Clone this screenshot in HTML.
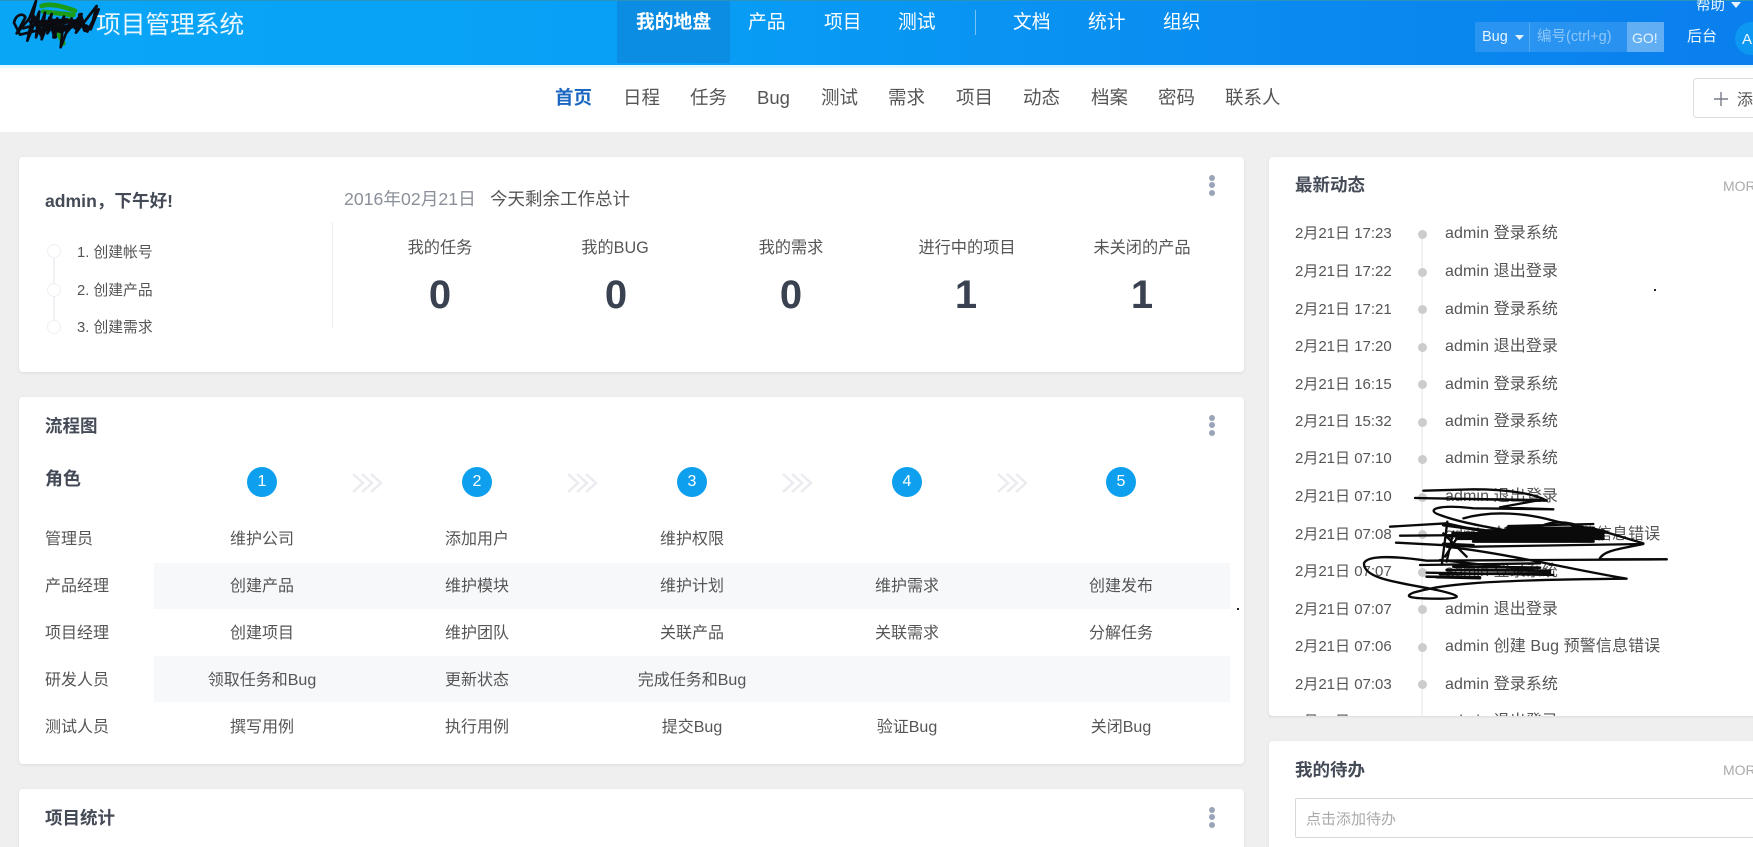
<!DOCTYPE html>
<html lang="zh"><head><meta charset="utf-8"><title>项目管理系统</title>
<style>
html,body{margin:0;padding:0;width:1753px;height:847px;overflow:hidden}
#r{width:1753px;height:847px;overflow:hidden;position:relative;background:#efefef;font-family:"Liberation Sans","Noto Sans CJK SC",sans-serif;color:#555}
.a{position:absolute;white-space:nowrap;line-height:24px;margin-top:-10px}
.c{transform:translateX(-50%)}
.card{position:absolute;background:#fff;border-radius:4px;box-shadow:0 1px 3px rgba(0,0,0,.08)}
.nav{font-size:18.8px;color:#fff}
.sub{font-size:18.5px;color:#555}
.ttl{font-size:17.5px;font-weight:700;color:#444b57;left:45px;margin-top:-11px}
.lab{font-size:16.2px;color:#555}
.num{font-size:40px;font-weight:700;color:#3a4150}
.step{font-size:14.8px;color:#555;left:77px}
.cel{font-size:16px;color:#555}
.role{font-size:16px;color:#555;left:45px}
.dt{font-size:15px;color:#555;left:1295px;margin-top:-11.5px}
.tx{font-size:16px;letter-spacing:.1px;color:#555;left:1445px;margin-top:-11px}
.dot{position:absolute;width:9px;height:9px;border-radius:50%;background:#ccc;left:1418px;margin-top:1px}
.num-c{position:absolute;width:30px;height:30px;border-radius:50%;background:#0ea0ee;color:#fff;font-size:16px;line-height:30px;text-align:center;top:467px}
.alt{position:absolute;left:154px;width:1076px;background:#f7f8fa}
.m{position:absolute;width:6px;height:6px;border-radius:50%;background:#9aa4b8;left:1209px}
.st{position:absolute;left:47px;width:14px;height:14px;border-radius:50%;background:#fff;border:1px solid #eef0f3;box-sizing:border-box}
</style></head><body><div id="r">

<div style="position:absolute;left:0;top:0;width:1753px;height:65px;background:linear-gradient(90deg,#0aa6f6 0%,#07a0f6 35%,#0a8cf0 70%,#0a7fee 100%);border-top:1px solid #2a93bd;box-sizing:border-box"></div>
<div style="position:absolute;left:0;top:65px;width:1753px;height:67px;background:#fff"></div>
<div style="position:absolute;left:0;top:65px;width:1753px;height:3px;background:#e6f8ff"></div>
<div style="position:absolute;left:617px;top:1px;width:113px;height:62px;background:#0a8de2"></div>

<div class="a" style="left:96px;top:24px;font-size:24.7px;color:#eaf7ff">项目管理系统</div>
<div class="a nav" style="left:636px;top:20px;font-weight:700">我的地盘</div>
<div class="a nav" style="left:748px;top:20px">产品</div>
<div class="a nav" style="left:824px;top:20px">项目</div>
<div class="a nav" style="left:898px;top:20px">测试</div>
<div style="position:absolute;left:975px;top:10px;width:1px;height:25px;background:rgba(255,255,255,.45)"></div>
<div class="a nav" style="left:1013px;top:20px">文档</div>
<div class="a nav" style="left:1088px;top:20px">统计</div>
<div class="a nav" style="left:1163px;top:20px">组织</div>

<div class="a" style="left:1696px;top:4px;font-size:14.5px;color:#e6f4ff">帮助</div>
<svg style="position:absolute;left:1731px;top:2px" width="10" height="6"><path d="M0 0H10L5 6Z" fill="#e6f4ff"/></svg>
<div style="position:absolute;left:1475px;top:22px;width:189px;height:30px;background:rgba(255,255,255,.13);border-radius:2px"></div>
<div style="position:absolute;left:1529px;top:22px;width:1px;height:30px;background:rgba(255,255,255,.18)"></div>
<div style="position:absolute;left:1627px;top:22px;width:37px;height:30px;background:rgba(255,255,255,.27)"></div>
<div class="a" style="left:1482px;top:35px;font-size:14.5px;color:#e6f4ff">Bug</div>
<svg style="position:absolute;left:1515px;top:35px" width="9" height="5"><path d="M0 0H9L4.5 5Z" fill="#e6f4ff"/></svg>
<div class="a" style="left:1537px;top:35px;font-size:14.5px;color:rgba(255,255,255,.48)">编号(ctrl+g)</div>
<div class="a" style="left:1632px;top:36px;font-size:14px;color:#e6f4ff">GO!</div>
<div class="a" style="left:1687px;top:35px;font-size:15px;color:#eef8ff">后台</div>
<div style="position:absolute;left:1735px;top:22px;width:33px;height:33px;border-radius:50%;background:#0c98f2"></div>
<div class="a" style="left:1742px;top:38px;font-size:15px;color:#eef8ff">A</div>

<div class="a sub" style="left:555px;top:96px;font-weight:700;color:#1a66c0">首页</div>
<div class="a sub" style="left:623px;top:96px">日程</div>
<div class="a sub" style="left:690px;top:96px">任务</div>
<div class="a sub" style="left:757px;top:96px">Bug</div>
<div class="a sub" style="left:821px;top:96px">测试</div>
<div class="a sub" style="left:888px;top:96px">需求</div>
<div class="a sub" style="left:956px;top:96px">项目</div>
<div class="a sub" style="left:1023px;top:96px">动态</div>
<div class="a sub" style="left:1091px;top:96px">档案</div>
<div class="a sub" style="left:1158px;top:96px">密码</div>
<div class="a sub" style="left:1225px;top:96px">联系人</div>
<div style="position:absolute;left:1693px;top:78px;width:80px;height:40px;border:1px solid #ddd;border-radius:4px;box-sizing:border-box"></div>
<svg style="position:absolute;left:1713px;top:91px" width="16" height="16"><path d="M8 1V15M1 8H15" stroke="#777c88" stroke-width="1.4"/></svg>
<div class="a" style="left:1737px;top:99px;font-size:16px;color:#555">添</div>

<!-- card 1 -->
<div class="card" style="left:19px;top:157px;width:1225px;height:215px"></div>
<div class="a" style="left:45px;top:199px;font-size:17.6px;font-weight:700;color:#444b57">admin，下午好!</div>
<div class="a" style="left:344px;top:197px;font-size:17.7px;color:#8a8f99">2016年02月21日</div>
<div class="a" style="left:490px;top:197px;font-size:17.5px;color:#555">今天剩余工作总计</div>
<div style="position:absolute;left:53px;top:251px;width:2px;height:76px;background:#f0f2f5"></div>
<div class="st" style="top:244px"></div><div class="st" style="top:283px"></div><div class="st" style="top:320px"></div>
<div class="a step" style="top:251px">1. 创建帐号</div>
<div class="a step" style="top:289px">2. 创建产品</div>
<div class="a step" style="top:326px">3. 创建需求</div>
<div style="position:absolute;left:332px;top:222px;width:1px;height:106px;background:#eceef1"></div>
<div class="a lab c" style="left:440px;top:246px">我的任务</div>
<div class="a lab c" style="left:615px;top:246px">我的BUG</div>
<div class="a lab c" style="left:791px;top:246px">我的需求</div>
<div class="a lab c" style="left:967px;top:246px">进行中的项目</div>
<div class="a lab c" style="left:1142px;top:246px">未关闭的产品</div>
<div class="a num c" style="left:440px;top:293px">0</div>
<div class="a num c" style="left:616px;top:293px">0</div>
<div class="a num c" style="left:791px;top:293px">0</div>
<div class="a num c" style="left:966px;top:293px">1</div>
<div class="a num c" style="left:1142px;top:293px">1</div>
<div class="m" style="top:175px"></div><div class="m" style="top:182px"></div><div class="m" style="top:190px"></div>

<!-- card 2 -->
<div class="card" style="left:19px;top:397px;width:1225px;height:367px"></div>
<div class="a ttl" style="top:425px">流程图</div>
<div class="m" style="top:415px"></div><div class="m" style="top:422px"></div><div class="m" style="top:430px"></div>
<div class="a ttl" style="top:478px;font-size:18px">角色</div>
<div class="num-c" style="left:247px">1</div><div class="num-c" style="left:462px">2</div><div class="num-c" style="left:677px">3</div><div class="num-c" style="left:892px">4</div><div class="num-c" style="left:1106px">5</div>
<svg style="position:absolute;left:0;top:470px" width="1240" height="28" fill="none" stroke="#e9ebef" stroke-width="2.4">
<path d="M353 4L363 13L353 22M362 4L372 13L362 22M371 4L381 13L371 22"/>
<path d="M568 4L578 13L568 22M577 4L587 13L577 22M586 4L596 13L586 22"/>
<path d="M783 4L793 13L783 22M792 4L802 13L792 22M801 4L811 13L801 22"/>
<path d="M998 4L1008 13L998 22M1007 4L1017 13L1007 22M1016 4L1026 13L1016 22"/>
</svg>
<div class="alt" style="top:563px;height:46px"></div>
<div class="alt" style="top:656px;height:46px"></div>
<div class="a role" style="top:538px">管理员</div>
<div class="a role" style="top:585px">产品经理</div>
<div class="a role" style="top:632px">项目经理</div>
<div class="a role" style="top:679px">研发人员</div>
<div class="a role" style="top:726px">测试人员</div>
<div class="a cel c" style="left:262px;top:538px">维护公司</div>
<div class="a cel c" style="left:477px;top:538px">添加用户</div>
<div class="a cel c" style="left:692px;top:538px">维护权限</div>
<div class="a cel c" style="left:262px;top:585px">创建产品</div>
<div class="a cel c" style="left:477px;top:585px">维护模块</div>
<div class="a cel c" style="left:692px;top:585px">维护计划</div>
<div class="a cel c" style="left:907px;top:585px">维护需求</div>
<div class="a cel c" style="left:1121px;top:585px">创建发布</div>
<div class="a cel c" style="left:262px;top:632px">创建项目</div>
<div class="a cel c" style="left:477px;top:632px">维护团队</div>
<div class="a cel c" style="left:692px;top:632px">关联产品</div>
<div class="a cel c" style="left:907px;top:632px">关联需求</div>
<div class="a cel c" style="left:1121px;top:632px">分解任务</div>
<div class="a cel c" style="left:262px;top:679px">领取任务和Bug</div>
<div class="a cel c" style="left:477px;top:679px">更新状态</div>
<div class="a cel c" style="left:692px;top:679px">完成任务和Bug</div>
<div class="a cel c" style="left:262px;top:726px">撰写用例</div>
<div class="a cel c" style="left:477px;top:726px">执行用例</div>
<div class="a cel c" style="left:692px;top:726px">提交Bug</div>
<div class="a cel c" style="left:907px;top:726px">验证Bug</div>
<div class="a cel c" style="left:1121px;top:726px">关闭Bug</div>

<!-- card 3 -->
<div class="card" style="left:19px;top:789px;width:1225px;height:80px"></div>
<div class="a ttl" style="top:817px">项目统计</div>
<div class="m" style="top:807px"></div><div class="m" style="top:814px"></div><div class="m" style="top:822px"></div>

<!-- right -->
<div class="card" style="left:1269px;top:157px;width:500px;height:559px;overflow:hidden"></div>
<div class="a ttl" style="left:1295px;top:184px">最新动态</div>
<div class="a" style="left:1723px;top:184px;font-size:14px;color:#aaa">MORE</div>
<div style="position:absolute;left:1421px;top:233px;width:2px;height:483px;background:#f0f1f3"></div>

<div class="a dt" style="top:233px">2月21日 17:23</div><div class="dot" style="top:229px"></div><div class="a tx" style="top:233px">admin 登录系统</div>
<div class="a dt" style="top:271px">2月21日 17:22</div><div class="dot" style="top:267px"></div><div class="a tx" style="top:271px">admin 退出登录</div>
<div class="a dt" style="top:309px">2月21日 17:21</div><div class="dot" style="top:304px"></div><div class="a tx" style="top:309px">admin 登录系统</div>
<div class="a dt" style="top:346px">2月21日 17:20</div><div class="dot" style="top:342px"></div><div class="a tx" style="top:346px">admin 退出登录</div>
<div class="a dt" style="top:384px">2月21日 16:15</div><div class="dot" style="top:379px"></div><div class="a tx" style="top:384px">admin 登录系统</div>
<div class="a dt" style="top:421px">2月21日 15:32</div><div class="dot" style="top:417px"></div><div class="a tx" style="top:421px">admin 登录系统</div>
<div class="a dt" style="top:458px">2月21日 07:10</div><div class="dot" style="top:454px"></div><div class="a tx" style="top:458px">admin 登录系统</div>
<div class="a dt" style="top:496px">2月21日 07:10</div><div class="dot" style="top:492px"></div><div class="a tx" style="top:496px">admin 退出登录</div>
<div class="a dt" style="top:534px">2月21日 07:08</div><div class="dot" style="top:529px"></div><div class="a tx" style="top:534px">admin 创建 Bug 预警信息错误</div>
<div class="a dt" style="top:571px">2月21日 07:07</div><div class="dot" style="top:567px"></div><div class="a tx" style="top:571px">admin 登录系统</div>
<div class="a dt" style="top:609px">2月21日 07:07</div><div class="dot" style="top:604px"></div><div class="a tx" style="top:609px">admin 退出登录</div>
<div class="a dt" style="top:646px">2月21日 07:06</div><div class="dot" style="top:642px"></div><div class="a tx" style="top:646px">admin 创建 Bug 预警信息错误</div>
<div class="a dt" style="top:684px">2月21日 07:03</div><div class="dot" style="top:679px"></div><div class="a tx" style="top:684px">admin 登录系统</div>
<div class="a dt" style="top:721px">2月21日 07:02</div><div class="a tx" style="top:721px">admin 退出登录</div>
<div style="position:absolute;left:1269px;top:716px;width:484px;height:25px;background:#efefef;box-shadow:inset 0 2px 2px -1px rgba(0,0,0,.08)"></div>

<div class="card" style="left:1269px;top:741px;width:500px;height:130px"></div>
<div class="a ttl" style="left:1295px;top:769px">我的待办</div>
<div class="a" style="left:1723px;top:768px;font-size:14px;color:#aaa">MORE</div>
<div style="position:absolute;left:1295px;top:798px;width:480px;height:40px;border:1px solid #d5d7db;border-radius:2px;box-sizing:border-box"></div>
<div class="a" style="left:1306px;top:818px;font-size:15px;color:#aaa">点击添加待办</div>

<!-- specks -->
<div style="position:absolute;left:1654px;top:289px;width:2px;height:2px;background:#222"></div>
<div style="position:absolute;left:1237px;top:608px;width:2px;height:2px;background:#222"></div>

<!-- scribble over logo -->
<svg style="position:absolute;left:0;top:0" width="260" height="70" viewBox="0 0 780 210" fill="none" stroke-linejoin="round" stroke-linecap="round">
<path d="M125 18C150 8 190 20 225 32M130 35L220 45M130 70L210 60M175 100L190 130" stroke="#1a9c18" stroke-width="14"/>
<path d="M42 68C48 42 70 38 76 52L50 100L88 55L108 3L82 122L118 35L108 112L135 38L125 118L155 42L142 100L172 55L160 112L192 50L182 142L215 55L198 100L245 42L228 98L290 18L272 88L296 28L262 95L240 62L200 92L150 82L60 104L42 68M70 85L150 60L240 62M90 65L200 90" stroke="#0b0b12" stroke-width="8"/>
<path d="M100 50L125 105M150 55L165 110M115 65L185 95M200 60L230 85M240 45L255 90M205 65L260 80M110 75L200 65M130 85L220 78" stroke="#0b0b12" stroke-width="13"/>
</svg>

<!-- scribble over activity -->
<svg style="position:absolute;left:1240px;top:400px" width="513" height="447" viewBox="0 0 1539 1341" fill="none" stroke="#0a0a0a" stroke-width="7" stroke-linejoin="round" stroke-linecap="round">
<path d="M550 272L700 268C800 268 880 280 920 302L525 294L900 300L780 322L940 328L700 325C590 312 555 330 600 345C680 375 780 385 860 405"/>
<path d="M670 355C760 330 860 340 940 362C990 375 1040 385 1100 395"/>
<path d="M450 380L620 370L800 410M480 407L700 405M468 428L700 440L1210 432C1150 445 1090 450 1078 478L1280 478"/>
<path d="M372 490C380 468 450 466 560 482L900 480L1280 478M372 490C370 540 500 550 590 570C680 590 660 596 590 596C510 596 490 590 520 578C600 555 700 540 1160 536C1000 510 800 460 620 440"/>
<path d="M622 365L606 490M640 395L620 485M660 400L615 470M610 400L680 470M600 480L920 515M540 495L900 490M560 518L940 525M590 532L720 535"/>
<path d="M805 378L1060 372M900 380C940 360 990 365 1040 385M1060 385L1210 430" />
<path d="M720 392L1090 392M640 400L1090 400M620 408L1090 408M650 416L1090 416M700 424L1060 424M800 384L1060 384M610 375L760 395M610 432L700 436" stroke-width="9"/>
<path d="M620 510L930 512M600 522L930 520M560 530L720 532M640 500L900 503" stroke-width="8"/>
</svg>
</div></body></html>
